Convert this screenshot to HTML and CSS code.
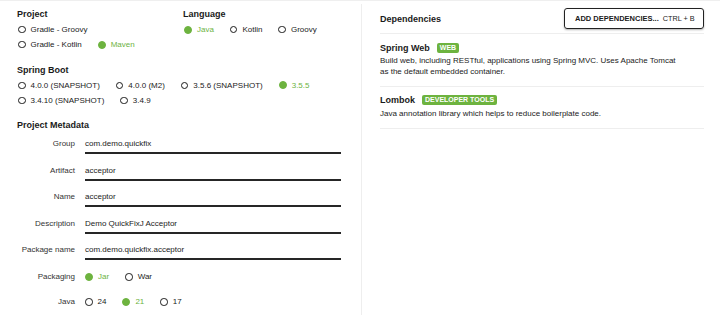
FILE: index.html
```html
<!DOCTYPE html>
<html>
<head>
<meta charset="utf-8">
<link rel="stylesheet" href="styles.css">
</head>
<body>
<div class="page">
  <div class="main">
    <div class="left">
      <div class="top-sections">
        <div class="sec sec-project">
          <div class="heading">Project</div>
          <div class="row">
            <span class="opt"><span class="dot"></span>Gradle - Groovy</span>
          </div>
          <div class="row">
            <span class="opt"><span class="dot"></span>Gradle - Kotlin</span>
            <span class="opt sel"><span class="dot"></span>Maven</span>
          </div>
        </div>
        <div class="sec sec-lang">
          <div class="heading">Language</div>
          <div class="row">
            <span class="opt sel"><span class="dot"></span>Java</span>
            <span class="opt"><span class="dot"></span>Kotlin</span>
            <span class="opt"><span class="dot"></span>Groovy</span>
          </div>
        </div>
      </div>
      <div class="sec sec-boot">
        <div class="heading">Spring Boot</div>
        <div class="row">
          <span class="opt"><span class="dot"></span>4.0.0 (SNAPSHOT)</span>
          <span class="opt"><span class="dot"></span>4.0.0 (M2)</span>
          <span class="opt"><span class="dot"></span>3.5.6 (SNAPSHOT)</span>
          <span class="opt sel"><span class="dot"></span>3.5.5</span>
        </div>
        <div class="row">
          <span class="opt"><span class="dot"></span>3.4.10 (SNAPSHOT)</span>
          <span class="opt"><span class="dot"></span>3.4.9</span>
        </div>
      </div>
      <div class="sec sec-meta">
        <div class="heading">Project Metadata</div>
        <div class="meta">
          <div class="mrow"><div class="mlabel">Group</div><div class="minput">com.demo.quickfix</div></div>
          <div class="mrow"><div class="mlabel">Artifact</div><div class="minput">acceptor</div></div>
          <div class="mrow"><div class="mlabel">Name</div><div class="minput">acceptor</div></div>
          <div class="mrow"><div class="mlabel">Description</div><div class="minput">Demo QuickFixJ Acceptor</div></div>
          <div class="mrow"><div class="mlabel">Package name</div><div class="minput">com.demo.quickfix.acceptor</div></div>
          <div class="mrow mradio mpack"><div class="mlabel">Packaging</div>
            <div class="mopts">
              <span class="opt sel"><span class="dot"></span>Jar</span>
              <span class="opt"><span class="dot"></span>War</span>
            </div>
          </div>
          <div class="mrow mradio mjava"><div class="mlabel">Java</div>
            <div class="mopts">
              <span class="opt"><span class="dot"></span>24</span>
              <span class="opt sel"><span class="dot"></span>21</span>
              <span class="opt"><span class="dot"></span>17</span>
            </div>
          </div>
        </div>
      </div>
    </div>
    <div class="right">
      <div class="dep-head">
        <div class="dep-title">Dependencies</div>
        <div class="add-btn"><span class="add-main">ADD DEPENDENCIES...</span><span class="add-key">CTRL + B</span></div>
      </div>
      <div class="dep">
        <div class="dep-name">Spring Web <span class="badge">WEB</span></div>
        <div class="dep-desc">Build web, including RESTful, applications using Spring MVC. Uses Apache Tomcat<br>as the default embedded container.</div>
      </div>
      <div class="dep dep2">
        <div class="dep-name">Lombok <span class="badge">DEVELOPER TOOLS</span></div>
        <div class="dep-desc">Java annotation library which helps to reduce boilerplate code.</div>
      </div>
    </div>
  </div>
</div>
</body>
</html>
```
FILE: styles.css
```css
html, body {
  margin: 0;
  padding: 0;
  background: #fff;
}
body {
  font-family: "Liberation Sans", Arial, sans-serif;
  color: #222;
  width: 720px;
  height: 315px;
  overflow: hidden;
}
.page {
  border-top: 1px solid #efefef;
  height: 314px;
}
.main {
  display: flex;
  margin-top: 3px;
  height: 311px;
}
.left {
  width: 344px;
  padding-left: 17px;
  padding-top: 3px;
  border-right: 1px solid #eeeeee;
  box-sizing: content-box;
}
.top-sections {
  display: flex;
}
.sec-project {
  width: 166px;
}
.heading {
  font-size: 9px;
  font-weight: bold;
  line-height: 15px;
  color: #1a1a1a;
}
.row {
  display: flex;
  height: 15px;
  align-items: center;
  padding-left: 1px;
}
.opt {
  display: inline-flex;
  align-items: center;
  font-size: 8px;
  line-height: 15px;
  margin-right: 16px;
  color: #222;
  white-space: nowrap;
}
.dot {
  display: inline-block;
  width: 7.5px;
  height: 7.5px;
  box-sizing: border-box;
  border: 1.3px solid #1a1a1a;
  border-radius: 50%;
  margin-right: 5px;
}
.opt.sel {
  color: #6db33f;
}
.opt.sel .dot {
  background: #6db33f;
  border-color: #6db33f;
  width: 8px;
  height: 8px;
}
.sec-boot {
  margin-top: 10.8px;
}
.sec-meta {
  margin-top: 10px;
}
.meta {
  margin-top: 5.5px;
}
.mrow {
  display: flex;
  align-items: flex-start;
  margin-bottom: 10.5px;
}
.mlabel {
  width: 58px;
  text-align: right;
  font-size: 8px;
  line-height: 12px;
  color: #333;
  margin-right: 10px;
  white-space: nowrap;
}
.minput {
  width: 256px;
  font-size: 8px;
  line-height: 12px;
  padding-bottom: 2px;
  border-bottom: 2px solid #262626;
  color: #222;
}
.mopts {
  display: flex;
  align-items: center;
  height: 12px;
}
.mopts .opt {
  line-height: 12px;
}
.mpack {
  margin-bottom: 13px;
}
.right {
  flex: 1;
  padding: 4px 16px 0 18px;
}
.dep-head {
  display: flex;
  justify-content: space-between;
  align-items: center;
  padding-bottom: 4px;
  border-bottom: 1px solid #eeeeee;
}
.dep-title {
  font-size: 9px;
  font-weight: bold;
  color: #1a1a1a;
}
.add-btn {
  height: 21px;
  box-sizing: border-box;
  width: 140px;
  border: 1px solid #222;
  border-radius: 3px;
  box-shadow: 0 1px 2px rgba(0, 0, 0, 0.3);
  display: flex;
  align-items: center;
  padding: 0 10px;
  font-size: 7.5px;
  color: #1a1a1a;
  white-space: nowrap;
}
.add-main {
  font-weight: bold;
  margin-right: 4px;
}
.add-key {
  font-size: 7.3px;
}
.dep {
  padding: 7.7px 0 8.9px;
  border-bottom: 1px solid #eeeeee;
}
.dep2 {
  padding-bottom: 8.3px;
}
.dep-name {
  font-size: 9px;
  font-weight: bold;
  line-height: 12px;
  color: #1a1a1a;
  display: flex;
  align-items: center;
}
.badge {
  display: inline-block;
  background: #6db33f;
  color: #fff;
  font-size: 7px;
  font-weight: bold;
  line-height: 10px;
  padding: 0 3px;
  border-radius: 2px;
  margin-left: 7px;
}
.dep-desc {
  font-size: 8px;
  line-height: 10.3px;
  margin-top: 2.6px;
  color: #222;
}
```
